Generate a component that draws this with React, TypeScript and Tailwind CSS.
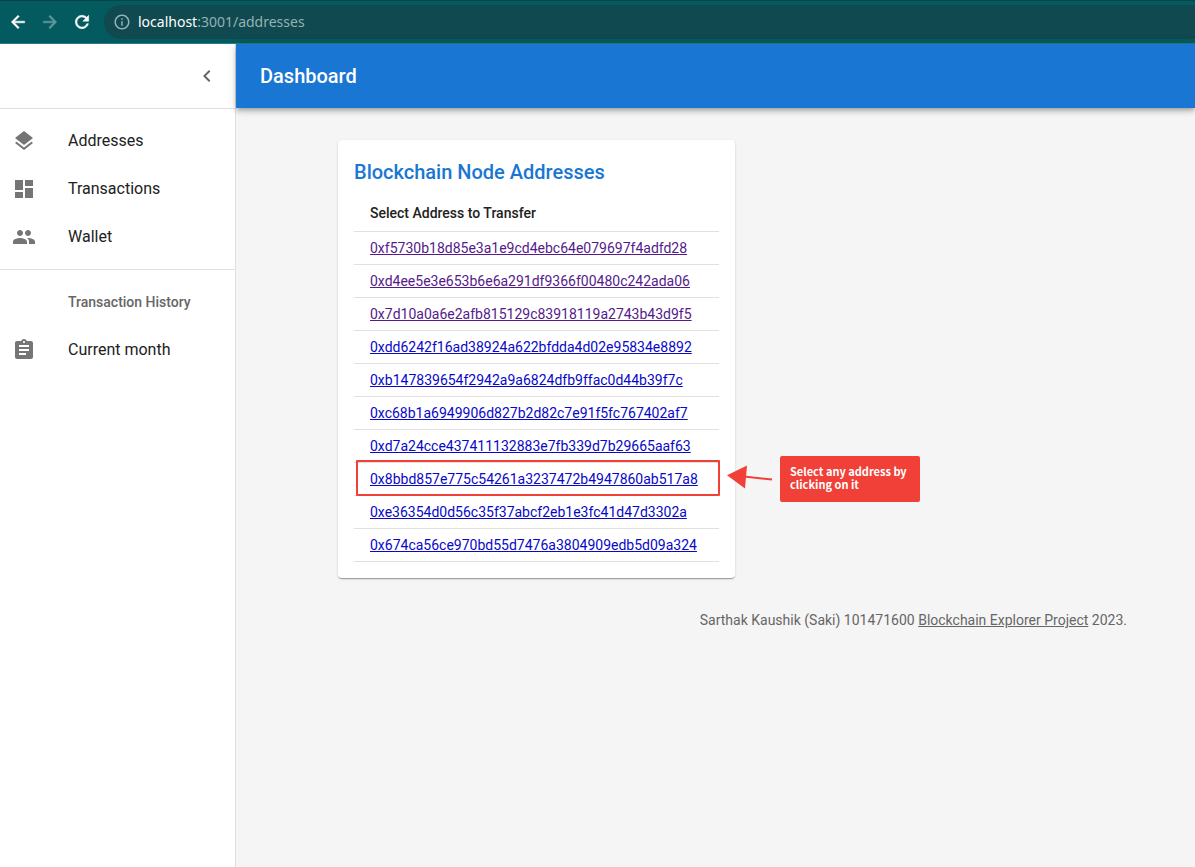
import type { ReactNode } from 'react';
import { MdAssignment, MdChevronLeft, MdDashboard, MdInfoOutline, MdLayers, MdPeople } from 'react-icons/md';

type Address = { hash: string; visited?: boolean; highlighted?: boolean };

const addresses: Address[] = [
  { hash: '0xf5730b18d85e3a1e9cd4ebc64e079697f4adfd28', visited: true },
  { hash: '0xd4ee5e3e653b6e6a291df9366f00480c242ada06', visited: true },
  { hash: '0x7d10a0a6e2afb815129c83918119a2743b43d9f5', visited: true },
  { hash: '0xdd6242f16ad38924a622bfdda4d02e95834e8892' },
  { hash: '0xb147839654f2942a9a6824dfb9ffac0d44b39f7c' },
  { hash: '0xc68b1a6949906d827b2d82c7e91f5fc767402af7' },
  { hash: '0xd7a24cce437411132883e7fb339d7b29665aaf63' },
  { hash: '0x8bbd857e775c54261a3237472b4947860ab517a8', highlighted: true },
  { hash: '0xe36354d0d56c35f37abcf2eb1e3fc41d47d3302a' },
  { hash: '0x674ca56ce970bd55d7476a3804909edb5d09a324' },
];

const toolbarIcons = {
  back: 'M20 11H7.83l5.59-5.59L12 4l-8 8 8 8 1.41-1.41L7.83 13H20v-2z',
  forward: 'M12 4l-1.41 1.41L16.17 11H4v2h12.17l-5.58 5.59L12 20l8-8z',
  reload:
    'M17.65 6.35C16.2 4.9 14.21 4 12 4c-4.42 0-7.99 3.58-7.99 8s3.57 8 7.99 8c3.73 0 6.84-2.55 7.73-6h-2.08c-.82 2.33-3.04 4-5.65 4-3.31 0-6-2.69-6-6s2.69-6 6-6c1.66 0 3.14.69 4.22 1.78L13 11h7V4l-2.35 2.35z',
};

function ToolbarIcon({ name }: { name: keyof typeof toolbarIcons }) {
  return (
    <svg className="size-5" viewBox="0 0 24 24" fill="currentColor" stroke="currentColor" strokeWidth="0.6" aria-hidden="true">
      <path d={toolbarIcons[name]} />
    </svg>
  );
}

function BrowserBar() {
  return (
    <div className="flex h-11 shrink-0 items-center border-t border-b border-t-[#044448] border-b-[#2b7c80] bg-[#045b5f] pl-2 text-white">
      <button type="button" aria-label="Back" className="flex w-8">
        <ToolbarIcon name="back" />
      </button>
      <button type="button" aria-label="Forward" className="flex w-8 text-[#5f9a9c]">
        <ToolbarIcon name="forward" />
      </button>
      <button type="button" aria-label="Reload" className="flex w-8">
        <ToolbarIcon name="reload" />
      </button>
      <div className="flex h-[34px] flex-1 items-center gap-[7px] rounded-l-full bg-[#10494f] pl-[9px] font-['Noto_Sans',sans-serif] text-sm text-[#93b3b5]">
        <MdInfoOutline className="size-[18px]" />
        <span>
          <span className="text-white">localhost</span>:3001/addresses
        </span>
      </div>
    </div>
  );
}

function NavItem({ icon, children }: { icon: ReactNode; children: ReactNode }) {
  return (
    <li>
      <a href="#" className="flex h-12 items-center gap-8 px-3 text-base text-[#212121]">
        <span className="text-2xl text-[#757575]">{icon}</span>
        {children}
      </a>
    </li>
  );
}

function Sidebar() {
  return (
    <aside className="w-[236px] shrink-0 border-r border-[#dfdfdf] bg-white">
      <div className="flex h-[65px] items-center justify-end border-b border-[#dfdfdf] pr-4">
        <button type="button" aria-label="Collapse menu" className="text-2xl text-[#666666]">
          <MdChevronLeft />
        </button>
      </div>
      <nav>
        <ul className="border-b border-[#dfdfdf] py-2">
          <NavItem icon={<MdLayers />}>Addresses</NavItem>
          <NavItem icon={<MdDashboard />}>Transactions</NavItem>
          <NavItem icon={<MdPeople />}>Wallet</NavItem>
        </ul>
        <h2 className="mt-2 pl-[68px] text-sm leading-[48px] font-medium text-[#666666]">Transaction History</h2>
        <ul>
          <NavItem icon={<MdAssignment />}>Current month</NavItem>
        </ul>
      </nav>
    </aside>
  );
}

function Callout() {
  return (
    <div className="pointer-events-none absolute -top-[3px] left-full flex items-start">
      <svg className="mt-1 ml-2 h-7 w-[46px]" viewBox="0 0 46 28" aria-hidden="true">
        <path d="M17 12.5 45 15.5" stroke="#f04038" strokeWidth="2" fill="none" />
        <path d="M0 11.2 20 1.5 18 24.5Z" fill="#f04038" />
      </svg>
      <p className="-mt-1 ml-[7px] h-[46px] w-[140px] rounded-[2px] bg-[#f04038] py-[9px] pl-[10px] font-['Noto_Sans_CJK_SC',sans-serif] text-[11px] leading-[13px] font-bold whitespace-nowrap text-white">
        Select any address by
        <br />
        clicking on it
      </p>
    </div>
  );
}

function AddressCard() {
  return (
    <section className="w-[397px] rounded bg-white p-4 shadow-[0_2px_1px_-1px_rgba(0,0,0,0.2),0_1px_1px_0_rgba(0,0,0,0.14),0_1px_3px_0_rgba(0,0,0,0.12)]">
      <h2 className="mb-[7px] text-xl leading-8 font-medium text-[#1976d2]">Blockchain Node Addresses</h2>
      <table className="w-full border-separate border-spacing-0 text-sm">
        <thead>
          <tr>
            <th className="border-b border-[#e0e0e0] px-4 py-[6px] text-left leading-6 font-medium text-[#212121]">
              Select Address to Transfer
            </th>
          </tr>
        </thead>
        <tbody>
          {addresses.map(({ hash, visited, highlighted }) => (
            <tr key={hash}>
              <td className="relative border-b border-[#e0e0e0] px-4 py-[6px] leading-5">
                <a href="#" className={visited ? 'text-[#551a8b] underline' : 'text-[#0808c8] underline'}>
                  {hash}
                </a>
                {highlighted && (
                  <>
                    <div className="pointer-events-none absolute -top-[3px] -right-px -bottom-px left-[2px] rounded-[1px] border-2 border-[#f04038]" />
                    <Callout />
                  </>
                )}
              </td>
            </tr>
          ))}
        </tbody>
      </table>
    </section>
  );
}

export default function App() {
  return (
    <div className="flex min-h-screen flex-col bg-[#f5f5f5] font-[Roboto,sans-serif]">
      <BrowserBar />
      <div className="flex flex-1">
        <Sidebar />
        <div className="flex min-w-0 flex-1 flex-col">
          <header className="flex h-16 items-center bg-[#1976d2] px-6 shadow-[0_2px_4px_-1px_rgba(0,0,0,0.2),0_4px_5px_0_rgba(0,0,0,0.14),0_1px_10px_0_rgba(0,0,0,0.12)]">
            <h1 className="text-xl font-medium text-white">Dashboard</h1>
          </header>
          <main className="pt-8 pl-[102px]">
            <AddressCard />
          </main>
          <footer className="mt-8 pr-[68px] text-right text-sm text-[#666666]">
            Sarthak Kaushik (Saki) 101471600{' '}
            <a href="#" className="underline">
              Blockchain Explorer Project
            </a>{' '}
            2023.
          </footer>
        </div>
      </div>
    </div>
  );
}
